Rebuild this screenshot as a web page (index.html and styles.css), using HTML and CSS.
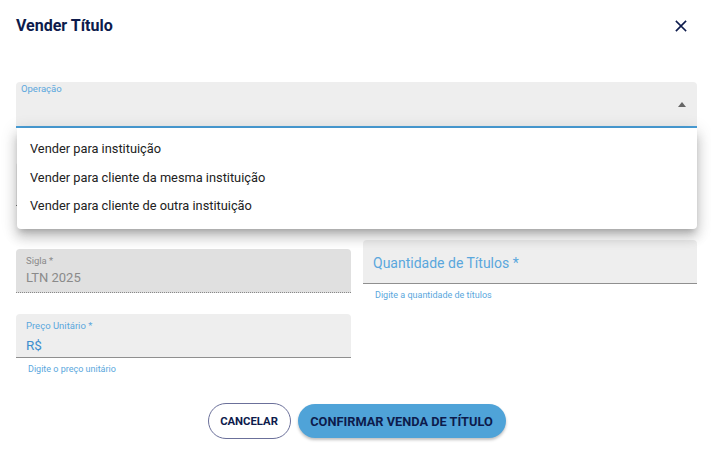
FILE: index.html
```html
<!DOCTYPE html>
<html lang="pt-BR">
<head>
<meta charset="utf-8">
<title>Vender Título</title>
<link rel="stylesheet" href="styles.css">
</head>
<body>
<div class="dialog">
  <header class="dialog-header">
    <h1 class="dialog-title">Vender Título</h1>
    <button class="close-btn" aria-label="Fechar">
      <svg width="12" height="12" viewBox="0 0 12 12"><path d="M1.5 1.5L10.5 10.5M10.5 1.5L1.5 10.5" stroke="#0d1b4c" stroke-width="1.7" stroke-linecap="square"/></svg>
    </button>
  </header>

  <form class="form">
    <div class="select-wrap">
      <div class="field field-select">
        <span class="field-label small">Operação</span>
        <span class="select-arrow"></span>
      </div>
      <ul class="menu">
        <li class="menu-item">Vender para instituição</li>
        <li class="menu-item">Vender para cliente da mesma instituição</li>
        <li class="menu-item">Vender para cliente de outra instituição</li>
      </ul>
    </div>

    <div class="row hidden-row">
      <div class="group"><div class="field field-muted"></div></div>
      <div class="group"><div class="field field-muted"></div></div>
    </div>

    <div class="row">
      <div class="group">
        <div class="field field-disabled">
          <span class="field-label small grey">Sigla *</span>
          <span class="field-value grey">LTN 2025</span>
        </div>
      </div>
      <div class="group">
        <div class="field field-plain">
          <span class="field-placeholder">Quantidade de Títulos *</span>
        </div>
        <div class="helper">Digite a quantidade de títulos</div>
      </div>
    </div>

    <div class="row row-price">
      <div class="group">
        <div class="field field-plain">
          <span class="field-label small">Preço Unitário *</span>
          <span class="field-value blue">R$</span>
        </div>
        <div class="helper">Digite o preço unitário</div>
      </div>
      <div class="group"></div>
    </div>
  </form>

  <div class="actions">
    <button class="btn btn-outline">CANCELAR</button>
    <button class="btn btn-primary">CONFIRMAR VENDA DE TÍTULO</button>
  </div>
</div>
</body>
</html>
```

FILE: styles.css
```css
* { box-sizing: border-box; }
html, body { margin: 0; padding: 0; background: #fff; }
body {
  font-family: Roboto, "Liberation Sans", Arial, sans-serif;
  color: #222;
  width: 711px;
  height: 456px;
  overflow: hidden;
}
.dialog {
  padding: 16px 14px 0 16px;
}
.dialog-header {
  display: flex;
  justify-content: space-between;
  align-items: center;
  height: 20px;
}
.dialog-title {
  margin: 0;
  font-size: 16px;
  line-height: 20px;
  font-weight: 700;
  color: #0d1b4c;
}
.close-btn {
  border: 0;
  background: none;
  padding: 0;
  margin-right: 10px;
  width: 12px;
  height: 12px;
  display: flex;
}
.form {
  margin-top: 46px;
  display: flex;
  flex-direction: column;
  gap: 12px;
}
.select-wrap { position: relative; }
.field {
  position: relative;
  height: 44px;
  border-radius: 4px 4px 0 0;
  background: #eeeeee;
  padding: 5px 10px 0 10px;
  display: flex;
  flex-direction: column;
}
.field-select {
  height: 46px;
  border-bottom: 2px solid #4a9fd8;
  padding: 1px 10px 0 5px;
}
.select-arrow {
  position: absolute;
  right: 11px;
  top: 20px;
  width: 0;
  height: 0;
  border-left: 4px solid transparent;
  border-right: 4px solid transparent;
  border-bottom: 5px solid #666;
}
.menu {
  position: absolute;
  left: 1px;
  right: 0;
  top: 46px;
  margin: 0;
  padding: 7px 0 8px;
  list-style: none;
  background: #fff;
  border-radius: 0 0 4px 4px;
  box-shadow: 0 5px 6px -3px rgba(0,0,0,.2), 0 9px 12px 1px rgba(0,0,0,.14), 0 3px 16px 2px rgba(0,0,0,.12);
  z-index: 10;
}
.menu-item {
  height: 28.5px;
  line-height: 28.5px;
  padding-left: 13px;
  font-size: 12.8px;
  color: #222;
}
.row {
  display: grid;
  grid-template-columns: 335px 1fr;
  column-gap: 12px;
  align-items: center;
}
.row-price { margin-top: 1px; }
.hidden-row { height: 88px; }
.field-muted {
  border-bottom: 1px solid #777;
}
.field-disabled {
  background: #e0e0e0;
  border-bottom: 1px dotted #888;
}
.field-plain {
  border-bottom: 1px solid #8f8f8f;
}
.field-label.small {
  font-size: 9.5px;
  line-height: 12px;
  color: #5aa7dd;
}
.row-price .field-label.small { margin-top: 1px; }
.field-label.grey { color: #8a8a8a; margin-top: 1px; }
.field-value {
  font-size: 13px;
  line-height: 20px;
  margin-top: 2px;
}
.field-value.grey { color: #8a8a8a; margin-top: 1px; }
.field-value.blue { color: #3d8ecf; font-size: 13.5px; margin-top: 3px; }
.field-placeholder {
  font-size: 14px;
  line-height: 20px;
  margin-top: 8px;
  color: #5aa7dd;
}
.helper {
  font-size: 9px;
  line-height: 12px;
  padding: 5px 0 0 12px;
  color: #5aa7dd;
}
.actions {
  display: flex;
  justify-content: center;
  align-items: center;
  gap: 7px;
  margin-top: 28px;
}
.btn {
  font-family: Roboto, "Liberation Sans", Arial, sans-serif;
  font-weight: 700;
  color: #0d1b4c;
  border-radius: 18px;
  cursor: pointer;
}
.btn-outline {
  background: #fff;
  border: 1px solid #6b709a;
  height: 36px;
  width: 83px;
  padding: 0;
  font-size: 11.3px;
}
.btn-primary {
  background: #4fa3d8;
  border: 0;
  height: 34px;
  width: 208px;
  padding: 0;
  font-size: 12.8px;
  box-shadow: 0 2px 3px rgba(0,0,0,.25);
}
```
